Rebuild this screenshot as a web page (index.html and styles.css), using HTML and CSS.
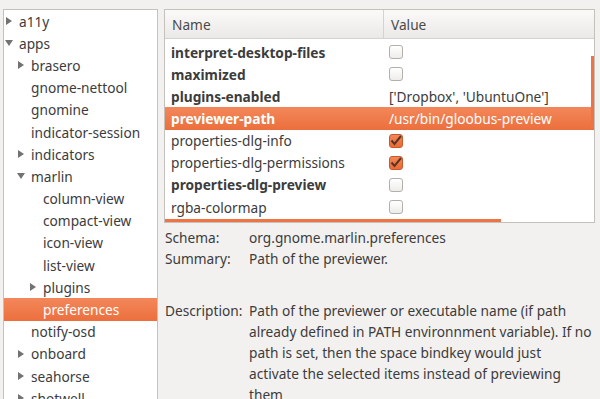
FILE: index.html
```html
<!DOCTYPE html>
<html lang="en">
<head>
  <meta charset="UTF-8" />
  <title>dconf Editor</title>
  <link rel="stylesheet" href="styles.css">
</head>
<body>

  <div class="tree">
    <div class="node"><span class="arrow closed"></span>a11y</div>
    <div class="node"><span class="arrow open"></span>apps</div>
    <div class="node lvl1"><span class="arrow closed"></span>brasero</div>
    <div class="node lvl1"><span class="arrow none"></span>gnome-nettool</div>
    <div class="node lvl1"><span class="arrow none"></span>gnomine</div>
    <div class="node lvl1"><span class="arrow none"></span>indicator-session</div>
    <div class="node lvl1"><span class="arrow closed"></span>indicators</div>
    <div class="node lvl1"><span class="arrow open"></span>marlin</div>
    <div class="node lvl2"><span class="arrow none"></span>column-view</div>
    <div class="node lvl2"><span class="arrow none"></span>compact-view</div>
    <div class="node lvl2"><span class="arrow none"></span>icon-view</div>
    <div class="node lvl2"><span class="arrow none"></span>list-view</div>
    <div class="node lvl2"><span class="arrow closed"></span>plugins</div>
    <div class="node lvl2 selected"><span class="arrow none"></span>preferences</div>
    <div class="node lvl1"><span class="arrow none"></span>notify-osd</div>
    <div class="node lvl1"><span class="arrow closed"></span>onboard</div>
    <div class="node lvl1"><span class="arrow closed"></span>seahorse</div>
    <div class="node lvl1"><span class="arrow closed"></span>shotwell</div>
  </div>

  <div class="right">
    <div class="keys">
      <div class="head">
        <div class="col name">Name</div>
        <div class="col value">Value</div>
      </div>
      <div class="row changed"><div class="name">interpret-desktop-files</div><div class="value"><span class="check"></span></div></div>
      <div class="row changed"><div class="name">maximized</div><div class="value"><span class="check"></span></div></div>
      <div class="row changed"><div class="name">plugins-enabled</div><div class="value">['Dropbox', 'UbuntuOne']</div></div>
      <div class="row changed selected"><div class="name">previewer-path</div><div class="value">/usr/bin/gloobus-preview</div></div>
      <div class="row"><div class="name">properties-dlg-info</div><div class="value"><span class="check on"><svg width="12" height="12" viewBox="0 0 12 12"><path d="M1.5 5.5 L4.5 9 L11 1" fill="none" stroke="#5b3424" stroke-width="2"/></svg></span></div></div>
      <div class="row"><div class="name">properties-dlg-permissions</div><div class="value"><span class="check on"><svg width="12" height="12" viewBox="0 0 12 12"><path d="M1.5 5.5 L4.5 9 L11 1" fill="none" stroke="#5b3424" stroke-width="2"/></svg></span></div></div>
      <div class="row changed"><div class="name">properties-dlg-preview</div><div class="value"><span class="check"></span></div></div>
      <div class="row"><div class="name">rgba-colormap</div><div class="value"><span class="check"></span></div></div>
      <div class="vscroll"></div>
      <div class="hscroll"></div>
    </div>

    <div class="info">
      <div class="label">Schema:</div>
      <div>org.gnome.marlin.preferences</div>
      <div class="label">Summary:</div>
      <div>Path of the previewer.</div>
      <div class="label desc">Description:</div>
      <div class="desc">Path of the previewer or executable name (if path already defined in PATH environnment variable). If no path is set, then the space bindkey would just<br>activate the selected items instead of previewing them</div>
    </div>
  </div>

</body>
</html>
```

FILE: styles.css
```css
* { box-sizing: border-box; }
html, body {
  margin: 0; padding: 0;
  width: 600px; height: 399px;
  overflow: hidden;
}
body {
  font-family: 'Noto Sans', sans-serif;
  font-size: 13.7px;
  color: #3c3c3c;
  background-color: #f2f1f0;
  display: flex;
  align-items: flex-start;
  gap: 6px;
  padding: 9px 5px 0 3px;
}
.tree {
  width: 155px;
  height: 420px;
  flex-shrink: 0;
  background: #fff;
  border: 1px solid #c4c1bd;
}
.node {
  height: 22.2px;
  display: flex;
  align-items: center;
  padding-left: 1px;
  white-space: nowrap;
}
.node.lvl1 { padding-left: 13px; }
.node.lvl2 { padding-left: 25px; }
.arrow {
  width: 14px;
  height: 8px;
  flex-shrink: 0;
  position: relative;
}
.arrow.closed::before {
  content: "";
  position: absolute;
  left: 1px; top: 0;
  border-left: 6px solid #727272;
  border-top: 4px solid transparent;
  border-bottom: 4px solid transparent;
}
.arrow.open::before {
  content: "";
  position: absolute;
  left: 0; top: 1px;
  border-top: 6px solid #727272;
  border-left: 4px solid transparent;
  border-right: 4px solid transparent;
}
.node.selected {
  background: linear-gradient(#f3875a, #ec6f3d);
  color: #fff;
}
.right {
  flex: 1;
  display: flex;
  flex-direction: column;
}
.keys {
  position: relative;
  height: 214px;
  background: #fff;
  border: 1px solid #c4c1bd;
  overflow: hidden;
}
.head {
  display: flex;
  height: 29px;
  background: linear-gradient(#fbfaf9, #ebe9e7);
  border-bottom: 1px solid #d6d3cf;
  margin-bottom: 2px;
}
.col {
  display: flex;
  align-items: center;
  padding-left: 7px;
  color: #4a4a4a;
}
.col.name {
  width: 219px;
  border-right: 1px solid #d6d3cf;
}
.row {
  display: flex;
  height: 22.15px;
  align-items: center;
  white-space: nowrap;
}
.row .name {
  width: 219px;
  padding-left: 6px;
}
.row .value {
  padding-left: 5px;
  display: flex;
  align-items: center;
}
.row.changed .name { font-weight: bold; }
.row.selected {
  background: linear-gradient(#f3875a, #ec6f3d);
  color: #fff;
}
.check {
  width: 14px;
  height: 14px;
  border: 1px solid #b3b0ac;
  border-radius: 3px;
  background: linear-gradient(#ffffff, #edecea);
  display: flex;
  align-items: center;
  justify-content: center;
}
.check.on {
  background: linear-gradient(#f3875a, #e96a35);
  border-color: #c9582a;
}
.vscroll {
  position: absolute;
  right: 0; top: 46px;
  width: 3px; height: 72px;
  background: #ee7444;
}
.hscroll {
  position: absolute;
  left: 0; bottom: 0;
  width: 336px; height: 3px;
  background: #ee7444;
}
.info {
  display: grid;
  grid-template-columns: 85px 1fr;
  line-height: 21px;
  margin-top: 4px;
}
.info .label { padding-left: 1px; }
.info .desc { margin-top: 31px; }
```
